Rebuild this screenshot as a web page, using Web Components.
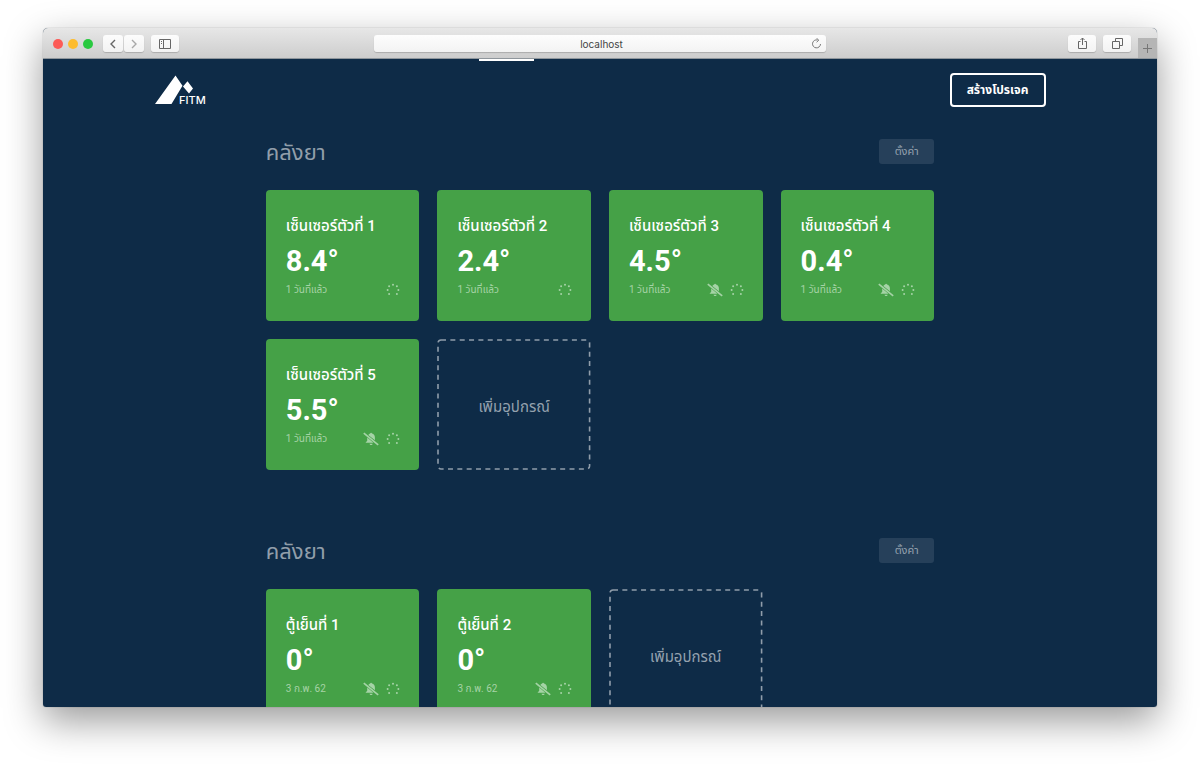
<!DOCTYPE html>
<html lang="th">
<head>
<meta charset="utf-8">
<title>FITM</title>
<style>
  * { box-sizing: border-box; }
  html, body { height: 100%; margin: 0; }
  body { background: #fff; font-family: Roboto, "Noto Sans", "Noto Sans Thai", sans-serif; overflow: hidden; }
</style>
</head>
<body>
<browser-window address="localhost">
  <app-header></app-header>
  <main>
    <sensor-group name="คลังยา">
      <sensor-card name="เซ็นเซอร์ตัวที่ 1" value="8.4°" time="1 วันที่แล้ว"></sensor-card>
      <sensor-card name="เซ็นเซอร์ตัวที่ 2" value="2.4°" time="1 วันที่แล้ว"></sensor-card>
      <sensor-card name="เซ็นเซอร์ตัวที่ 3" value="4.5°" time="1 วันที่แล้ว" muted></sensor-card>
      <sensor-card name="เซ็นเซอร์ตัวที่ 4" value="0.4°" time="1 วันที่แล้ว" muted></sensor-card>
      <sensor-card name="เซ็นเซอร์ตัวที่ 5" value="5.5°" time="1 วันที่แล้ว" muted></sensor-card>
      <add-device></add-device>
    </sensor-group>
    <sensor-group name="คลังยา">
      <sensor-card name="ตู้เย็นที่ 1" value="0°" time="3 ก.พ. 62" muted></sensor-card>
      <sensor-card name="ตู้เย็นที่ 2" value="0°" time="3 ก.พ. 62" muted></sensor-card>
      <add-device></add-device>
    </sensor-group>
  </main>
</browser-window>

<template id="browser-window">
  <style>
    * { box-sizing: border-box; }
    :host { display: block; height: 100%; padding: 28px 43px 57px; }
    .window { display: flex; flex-direction: column; height: 100%; border-radius: 5px 5px 3px 3px; overflow: hidden; background: #0e2b47; }
    .frame { height: 100%; border-radius: 5px 5px 3px 3px; box-shadow: 0 0 1px rgba(0,0,0,.5), 0 14px 38px rgba(0,0,0,.4); }
    .bar { flex: none; display: grid; grid-template-columns: 1fr minmax(0, 452px) 1fr; align-items: center; height: 31px; padding-top: 1px; background: linear-gradient(#e7e7e7, #cdcdcd); border-bottom: 1px solid #8f969c; }
    .left, .right { display: flex; align-items: center; }
    .left { padding-left: 10px; }
    .right { justify-content: flex-end; align-self: stretch; gap: 7px; }
    .lights { display: flex; gap: 5px; margin-right: 10px; }
    .lights i { width: 10px; height: 10px; border-radius: 50%; background: #fc5b57; }
    .lights i:nth-child(2) { background: #fdbc2e; }
    .lights i:nth-child(3) { background: #29c940; }
    button { flex: none; display: flex; align-items: center; justify-content: center; height: 17px; width: 28px; padding: 0; border: 0; border-radius: 3px; color: #666; background: linear-gradient(#fcfcfc, #f3f3f3); box-shadow: 0 1px 1px rgba(0,0,0,.18); }
    .nav { width: 20px; }
    .nav + .nav { margin: 0 7px 0 1px; color: #a8a8a8; }
    .plus { align-self: flex-end; width: 19px; height: 20px; border-radius: 0; background: #b5b5b5; color: #777; box-shadow: none; }
    form { display: flex; align-items: center; height: 17px; margin: 0; padding: 0 4px 0 18px; border-radius: 3px; background: linear-gradient(#fdfdfd, #f3f3f3); box-shadow: 0 1px 1px rgba(0,0,0,.18); }
    input { flex: 1; min-width: 0; height: 17px; padding: 0; border: 0; outline: 0; background: none; text-align: center; font: 10px Inter, sans-serif; color: #444; }
    .reload { width: 11px; background: none; box-shadow: none; color: #777; }
    svg { display: block; fill: none; stroke: currentColor; }
    .page { flex: 1; min-height: 0; overflow: hidden; }
  </style>
  <div class="frame"><div class="window">
    <div class="bar">
      <div class="left">
        <div class="lights"><i></i><i></i><i></i></div>
        <button class="nav" aria-label="Back"><svg width="8" height="10" stroke-width="1.4"><path d="M6 1 2 5l4 4"/></svg></button>
        <button class="nav" aria-label="Forward"><svg width="8" height="10" stroke-width="1.4"><path d="m2 1 4 4-4 4"/></svg></button>
        <button aria-label="Sidebar"><svg width="12" height="10"><path d="M.5.5h11v9H.5zM4.500.5v9M2 2.500h1M2 4.500h1"/></svg></button>
      </div>
      <form><input aria-label="Address"><button class="reload" type="button" aria-label="Reload"><svg width="11" height="11"><path d="M6.500 2A4 4 0 1 0 9.500 6M5.500.2l2.300 2-2.200 2"/></svg></button></form>
      <div class="right">
        <button aria-label="Share"><svg width="11" height="13"><path d="M3.500 4.500h-2v7h8v-7h-2M5.500 8V1M3.500 3l2-2 2 2"/></svg></button>
        <button aria-label="Tabs"><svg width="11" height="11"><path d="M.5 3.500h7v7h-7zM3.500 3.500v-3h7v7h-3"/></svg></button>
        <button class="plus" aria-label="New tab"><svg width="9" height="9"><path d="M4.500 0v9M0 4.500h9"/></svg></button>
      </div>
    </div>
    <div class="page"><slot></slot></div>
  </div></div>
</template>

<template id="app-header">
  <style>
    * { box-sizing: border-box; }
    :host { display: block; position: relative; }
    header { display: flex; justify-content: space-between; align-items: center; width: 80%; height: 62px; margin: 0 auto; }
    .progress { position: absolute; top: 0; left: 39.100%; width: 5%; height: 2px; background: #fff; }
    a { display: block; color: #fff; }
    svg { display: block; overflow: visible; font: 500 11px Inter, sans-serif; }
    button { height: 34px; width: 96px; padding: 0; border: 2px solid #fff; border-radius: 4px; background: none; color: #fff; font: 700 12px Roboto, "Noto Sans", "Noto Sans Thai", sans-serif; }
  </style>
  <div class="progress"></div>
  <header>
    <a href="#" aria-label="FITM"><svg width="54" height="36" viewBox="-1 -3 54 36" fill="currentColor"><path d="M0 29 20.500.5l7 10.200L16.500 29zM28 11.500l4.500-5.200 5.500 7.300-4 5z"/><text x="24" y="29">FITM</text></svg></a>
    <button>สร้างโปรเจค</button>
  </header>
</template>

<template id="sensor-group">
  <style>
    * { box-sizing: border-box; }
    :host { display: block; width: 60%; margin: 0 auto; padding: 18px 0 50px; }
    .head { display: flex; justify-content: space-between; align-items: center; height: 25px; margin-bottom: 26px; }
    h2 { margin: 0; padding-top: 2px; font-weight: 400; font-size: 22px; line-height: 28px; color: #919eaa; }
    button { width: 55px; height: 25px; padding: 0; border: 0; border-radius: 3px; background: #26405a; color: #94a1ae; font: 400 11px Roboto, "Noto Sans", "Noto Sans Thai", sans-serif; }
    .grid { display: grid; grid-template-columns: repeat(4, minmax(0, 1fr)); grid-auto-rows: 131px; gap: 18px; }
  </style>
  <div class="head"><h2></h2><button>ตั้งค่า</button></div>
  <div class="grid"><slot></slot></div>
</template>

<template id="sensor-card">
  <style>
    * { box-sizing: border-box; }
    :host { display: flex; flex-direction: column; padding: 24px 19px 20px 20px; border-radius: 4px; background: #45a147; color: #fff; white-space: nowrap; }
    h3 { margin: 0; font-weight: 500; font-size: 15px; line-height: 24px; }
    .value { padding-top: 2px; font-weight: 700; font-size: 29px; line-height: 42px; }
    .foot { display: flex; align-items: center; gap: 7px; height: 16px; color: #a5d3a6; font-size: 10px; line-height: 16px; }
    time { flex: 1; }
    svg { display: block; flex: none; fill: currentColor; }
    .bell { display: none; }
    :host([muted]) .bell { display: block; }
  </style>
  <h3></h3>
  <div class="value"></div>
  <div class="foot">
    <time></time>
    <svg class="bell" width="16" height="14" viewBox="0 0 16 14"><path d="M5.300 3.100C5.800 2.300 6.400 1.800 7.200 1.600 7.200.5 9 .5 9 1.600c1.900.5 2.900 2 2.900 4v2.700zM4.200 5.500l6.300 5.300H2.500l1.700-2zM6.500 11.700h3.200c-.3 1.800-2.900 1.800-3.200 0z"/><path d="M.8 1.200 15.200 12.800" stroke="currentColor" stroke-width="1.700"/></svg>
    <svg width="14" height="14" viewBox="0 0 14 14"><circle cx="7" cy="1.800" r="1"/><circle cx="10.900" cy="3.200" r="1"/><circle cx="12.400" cy="7" r="1"/><circle cx="10.900" cy="10.900" r="1"/><circle cx="3.100" cy="10.900" r="1"/><circle cx="1.600" cy="7" r="1"/><circle cx="3.100" cy="3.200" r="1"/></svg>
  </div>
</template>

<template id="add-device">
  <style>
    :host { display: grid; }
    button { position: relative; padding: 4px 0 0; border: 0; background: none; color: #94a1ae; font: 400 15px/24px Roboto, "Noto Sans", "Noto Sans Thai", sans-serif; }
    svg { position: absolute; inset: 0; width: 100%; height: 100%; fill: none; stroke: #909daa; stroke-width: 1.600; stroke-dasharray: 5 4.350; }
    rect { x: 1px; y: 1px; width: calc(100% - 2px); height: calc(100% - 2px); }
  </style>
  <button><svg aria-hidden="true"><rect rx="3"/></svg>เพิ่มอุปกรณ์</button>
</template>

<script>
  class Base extends HTMLElement {
    connectedCallback() {
      if (this.shadowRoot) return;
      const root = this.attachShadow({ mode: "open" });
      root.append(document.getElementById(this.localName).content.cloneNode(true));
      this.fill(root);
    }
    fill() {}
  }
  customElements.define("browser-window", class extends Base {
    fill(root) { root.querySelector("input").value = this.getAttribute("address"); }
  });
  customElements.define("app-header", class extends Base {});
  customElements.define("sensor-group", class extends Base {
    fill(root) { root.querySelector("h2").textContent = this.getAttribute("name"); }
  });
  customElements.define("sensor-card", class extends Base {
    fill(root) {
      root.querySelector("h3").textContent = this.getAttribute("name");
      root.querySelector(".value").textContent = this.getAttribute("value");
      root.querySelector("time").textContent = this.getAttribute("time");
    }
  });
  customElements.define("add-device", class extends Base {});
</script>
</body>
</html>
